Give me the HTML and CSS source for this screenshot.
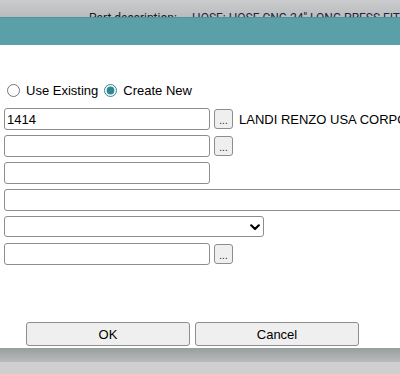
FILE: index.html
```html
<!DOCTYPE html>
<html>
<head>
<meta charset="utf-8">
<link rel="stylesheet" href="styles.css">
</head>
<body>
<div class="page">
  <div class="topbar">
    <span class="lbl">Part description:</span>
    <span class="val">HOSE: HOSE CNG 24'' LONG PRESS FIT</span>
  </div>
  <div class="dialog">
    <div class="dlg-head"></div>
    <div class="dlg-body">
      <div class="radios">
        <label class="opt"><input type="radio" name="m" class="radio"><span>Use Existing</span></label>
        <label class="opt"><input type="radio" name="m" class="radio" checked><span>Create New</span></label>
      </div>
      <div class="fields">
        <div class="row">
          <input class="txt" type="text" value="1414">
          <button class="dots">...</button>
          <span class="vendor">LANDI RENZO USA CORPORATION</span>
        </div>
        <div class="row">
          <input class="txt" type="text">
          <button class="dots">...</button>
        </div>
        <div class="row">
          <input class="txt" type="text">
        </div>
        <div class="row">
          <input class="txt wide" type="text">
        </div>
        <div class="row sel-row">
          <div class="selwrap">
            <select class="sel"><option></option></select>
            <svg class="chev" width="10" height="7" viewBox="0 0 10 7"><path d="M1.2 1.3 L5 5 L8.8 1.3" fill="none" stroke="#000" stroke-width="2.2" stroke-linecap="round" stroke-linejoin="round"/></svg>
          </div>
        </div>
        <div class="row">
          <input class="txt" type="text">
          <button class="dots">...</button>
        </div>
      </div>
      <div class="actions">
        <button class="btn">OK</button>
        <button class="btn">Cancel</button>
      </div>
    </div>
  </div>
  <div class="bottom">
    <div class="shade"></div>
    <div class="base"></div>
  </div>
</div>
</body>
</html>
```

FILE: styles.css
```css
html, body {
  margin: 0;
  padding: 0;
  background: #ffffff;
}
body {
  font-family: "Liberation Sans", Arial, sans-serif;
  font-size: 13px;
  color: #000;
  overflow: hidden;
}
.page {
  width: 400px;
  height: 374px;
  overflow: hidden;
  display: flex;
  flex-direction: column;
}
.topbar {
  height: 17px;
  flex: 0 0 17px;
  background: linear-gradient(#cbcccd, #b9bbbc);
  overflow: hidden;
  white-space: nowrap;
  font-family: Roboto, "Liberation Sans", sans-serif;
  line-height: 15px;
  padding-top: 10px;
  box-sizing: border-box;
}
.topbar .lbl {
  display: inline-block;
  margin-left: 89px;
  color: #1a1a1a;
  font-size: 12px;
}
.topbar .val {
  display: inline-block;
  margin-left: 12px;
  color: #1d2440;
  font-size: 12px;
}
.dialog {
  display: flex;
  flex-direction: column;
  background: #fff;
}
.dlg-head {
  height: 28px;
  background: #5ba0a8;
  border-top: 1px solid #4f939b;
  box-sizing: border-box;
}
.dlg-body {
  height: 303px;
  box-sizing: border-box;
  padding-top: 37px;
  padding-left: 4px;
}
.radios {
  display: flex;
  align-items: center;
  height: 16px;
}
.opt {
  display: flex;
  align-items: center;
  margin-right: 2px;
}
.radio {
  width: 13px;
  height: 13px;
  margin: 0 6px 0 3px;
  accent-color: #2f8791;
}
.opt + .opt .radio {
  margin-left: 4px;
}
.fields {
  margin-top: 10px;
  display: flex;
  flex-direction: column;
  gap: 5px;
}
.row {
  display: flex;
  align-items: center;
  height: 22px;
  white-space: nowrap;
}
.txt {
  box-sizing: border-box;
  width: 206px;
  height: 22px;
  border: 1px solid #8d8d8d;
  border-radius: 3px;
  padding: 0 2px;
  margin: 0;
  font-family: "Liberation Sans", Arial, sans-serif;
  font-size: 13px;
  color: #000;
  background: #fff;
  outline: none;
  flex: 0 0 auto;
}
.txt.wide {
  width: 420px;
}
.dots {
  box-sizing: border-box;
  width: 19px;
  height: 20px;
  margin: 0 0 0 4px;
  padding: 3px 0 0 0;
  border: 1px solid #8d8d8d;
  border-radius: 3px;
  background: #efefef;
  font-family: "Liberation Sans", Arial, sans-serif;
  font-size: 10px;
  line-height: 10px;
  color: #222;
  flex: 0 0 auto;
}
.vendor {
  margin-left: 6px;
  font-size: 13px;
}
.sel-row {
  height: 21px;
  margin-bottom: 1px;
}
.selwrap {
  position: relative;
  width: 260px;
  height: 21px;
}
.sel {
  appearance: none;
  -webkit-appearance: none;
  box-sizing: border-box;
  width: 260px;
  height: 21px;
  margin: 0;
  border: 1px solid #8d8d8d;
  border-radius: 3px;
  background: #fff;
  font-family: "Liberation Sans", Arial, sans-serif;
  font-size: 13px;
}
.chev {
  position: absolute;
  left: 246px;
  top: 8px;
  pointer-events: none;
}
.actions {
  margin-top: 57px;
  margin-left: 22px;
  display: flex;
  gap: 5px;
}
.btn {
  box-sizing: border-box;
  width: 164px;
  height: 24px;
  margin: 0;
  border: 1px solid #8d8d8d;
  border-radius: 3px;
  background: #efefef;
  font-family: "Liberation Sans", Arial, sans-serif;
  font-size: 13px;
  color: #000;
  padding: 0;
}
.bottom {
  flex: 1 1 auto;
  display: flex;
  flex-direction: column;
}
.shade {
  height: 14px;
  background: linear-gradient(#989d9d, #b8bbbb);
}
.base {
  flex: 1 1 auto;
  background: #cfcfcf;
}
```
